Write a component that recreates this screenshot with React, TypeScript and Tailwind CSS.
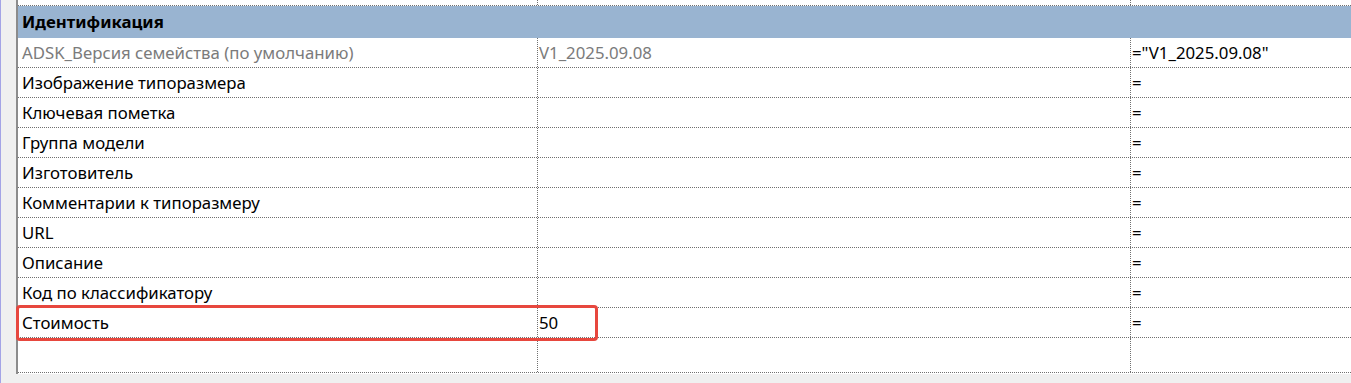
import React from "react";

const rows: { name: string; value?: string; formula: string; grey?: boolean }[] = [
  { name: "ADSK_Версия семейства (по умолчанию)", value: "V1_2025.09.08", formula: '="V1_2025.09.08"', grey: true },
  { name: "Изображение типоразмера", formula: "=" },
  { name: "Ключевая пометка", formula: "=" },
  { name: "Группа модели", formula: "=" },
  { name: "Изготовитель", formula: "=" },
  { name: "Комментарии к типоразмеру", formula: "=" },
  { name: "URL", formula: "=" },
  { name: "Описание", formula: "=" },
  { name: "Код по классификатору", formula: "=" },
  { name: "Стоимость", value: "50", formula: "=" },
];

export default function App() {
  return (
    <div
      className="relative w-[1351px] h-[383px] overflow-hidden bg-[#f0f0f0] border-l border-[#a4a4e6] flex"
      style={{ fontFamily: '"Noto Sans", "Open Sans", sans-serif' }}
    >
      <div className="ml-[15px] w-[1400px] h-[374px] bg-white border-l-2 border-[#8c8c8c] flex flex-col text-[16.8px] text-black">
        {/* partially visible row above */}
        <div className="h-[6px] flex border-b border-dotted border-[#707070]">
          <div className="w-[520px] border-r border-dotted border-[#707070]" />
          <div className="w-[593px] border-r border-dotted border-[#707070]" />
          <div className="flex-1" />
        </div>
        {/* group header */}
        <div className="h-[32px] bg-[#99b4d1] flex items-center pl-[4px] font-bold">
          Идентификация
        </div>
        {rows.map((r) => (
          <div key={r.name} className="h-[30px] flex border-b border-dotted border-[#707070]">
            <div
              className={`w-[520px] border-r border-dotted border-[#707070] pl-[4px] flex items-center whitespace-nowrap ${r.grey ? "text-[#7b7b7b]" : ""}`}
            >
              {r.name}
            </div>
            <div
              className={`w-[593px] border-r border-dotted border-[#707070] pl-[1px] flex items-center ${r.grey ? "text-[#7b7b7b]" : ""}`}
            >
              {r.value ?? ""}
            </div>
            <div className="flex-1 pl-[1px] flex items-center">{r.formula}</div>
          </div>
        ))}
        <div className="h-[35px] flex border-b border-dotted border-[#707070]">
          <div className="w-[520px] border-r border-dotted border-[#707070]" />
          <div className="w-[593px] border-r border-dotted border-[#707070]" />
          <div className="flex-1" />
        </div>
      </div>
      {/* highlight box */}
      <div className="absolute left-[15px] top-[305px] w-[582px] h-[36px] border-[3px] border-[#e7473e] rounded-[4px]" />
    </div>
  );
}
